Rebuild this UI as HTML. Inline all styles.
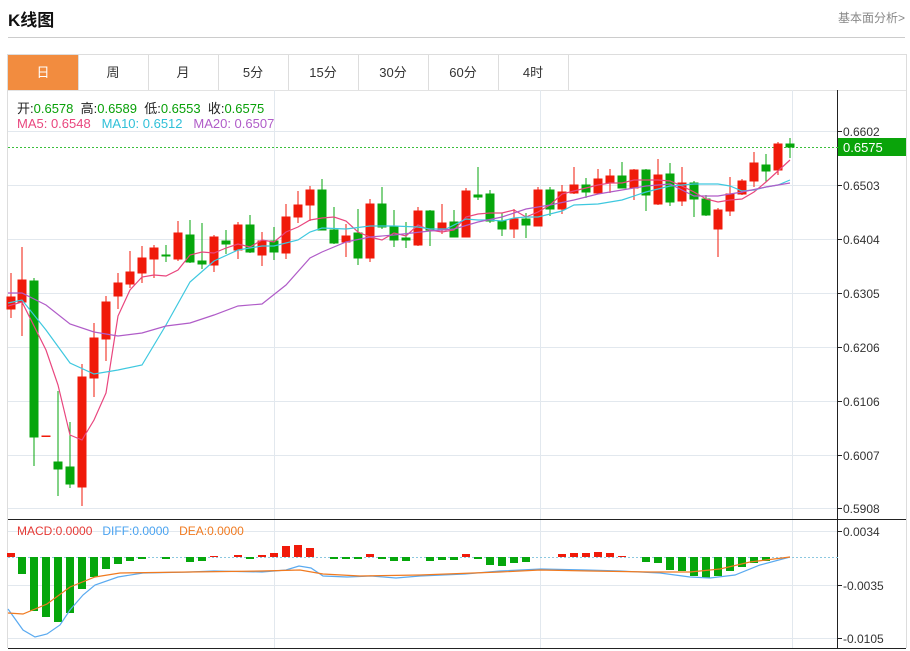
<!DOCTYPE html>
<html><head><meta charset="utf-8"><style>
body{margin:0;width:910px;height:651px;background:#fff;font-family:"Liberation Sans","Noto Sans CJK SC",sans-serif;position:relative;overflow:hidden}
.t{position:absolute;left:8px;top:6px;font-size:17px;font-weight:bold;color:#111}
.r{position:absolute;right:5px;top:9px;font-size:12px;color:#888}
.hl{position:absolute;left:8px;top:37px;width:897px;height:1px;background:#ccc}
.tabs{position:absolute;left:7px;top:54px;width:898px;height:35px;border:1px solid #ddd;border-bottom:1px solid #e3e3e3}
.tab{position:absolute;top:0;height:35px;width:70px;border-right:1px solid #ddd;text-align:center;line-height:35px;font-size:13px;color:#333}
.on{background:#f28c3f;color:#fff}
.info{position:absolute;left:17px;font-size:13px;white-space:pre}
</style></head><body>
<div class="t">K线图</div>
<div class="r">基本面分析&gt;</div>
<div class="hl"></div>
<div class="tabs">
<div class="tab on" style="left:0">日</div>
<div class="tab" style="left:70px">周</div>
<div class="tab" style="left:140px">月</div>
<div class="tab" style="left:210px">5分</div>
<div class="tab" style="left:280px">15分</div>
<div class="tab" style="left:350px">30分</div>
<div class="tab" style="left:420px">60分</div>
<div class="tab" style="left:490px">4时</div>
</div>
<svg style="position:absolute;left:0;top:0" width="910" height="651">
<g stroke="#e2e8ee" stroke-width="1">
<line x1="8" x2="838" y1="131.5" y2="131.5"/><line x1="8" x2="838" y1="185.5" y2="185.5"/><line x1="8" x2="838" y1="239.5" y2="239.5"/><line x1="8" x2="838" y1="293.5" y2="293.5"/><line x1="8" x2="838" y1="347.5" y2="347.5"/><line x1="8" x2="838" y1="401.5" y2="401.5"/><line x1="8" x2="838" y1="455.5" y2="455.5"/><line x1="8" x2="838" y1="508.5" y2="508.5"/>
<line x1="8" x2="838" y1="531.5" y2="531.5"/><line x1="8" x2="838" y1="585.5" y2="585.5"/><line x1="8" x2="838" y1="638.5" y2="638.5"/>
<line x1="274.5" x2="274.5" y1="90" y2="648"/><line x1="540.5" x2="540.5" y1="90" y2="648"/><line x1="792.5" x2="792.5" y1="90" y2="648"/>
</g>
<line x1="906.5" x2="906.5" y1="54" y2="648" stroke="#ddd"/>
<line x1="7.5" x2="7.5" y1="90" y2="648" stroke="#ddd"/>
<line x1="8" x2="906" y1="519.5" y2="519.5" stroke="#222"/>
<line x1="8" x2="906" y1="648.5" y2="648.5" stroke="#222"/>
<line x1="837.5" x2="837.5" y1="90" y2="648" stroke="#222"/>
<g stroke="#222"><line x1="838" x2="842" y1="131.5" y2="131.5"/><line x1="838" x2="842" y1="185.5" y2="185.5"/><line x1="838" x2="842" y1="239.5" y2="239.5"/><line x1="838" x2="842" y1="293.5" y2="293.5"/><line x1="838" x2="842" y1="347.5" y2="347.5"/><line x1="838" x2="842" y1="401.5" y2="401.5"/><line x1="838" x2="842" y1="455.5" y2="455.5"/><line x1="838" x2="842" y1="508.5" y2="508.5"/><line x1="838" x2="842" y1="531.5" y2="531.5"/><line x1="838" x2="842" y1="585.5" y2="585.5"/><line x1="838" x2="842" y1="638.5" y2="638.5"/></g>
<g font-size="12" fill="#333" font-family="Liberation Sans,sans-serif">
<text x="843" y="136">0.6602</text><text x="843" y="190">0.6503</text><text x="843" y="244">0.6404</text><text x="843" y="298">0.6305</text><text x="843" y="352">0.6206</text><text x="843" y="406">0.6106</text><text x="843" y="460">0.6007</text><text x="843" y="513">0.5908</text>
<text x="843" y="536">0.0034</text><text x="843" y="590">-0.0035</text><text x="843" y="643">-0.0105</text>
</g>
<line x1="8" x2="838" y1="147.5" y2="147.5" stroke="#3bbf3b" stroke-dasharray="2,2"/>
<rect x="838" y="138" width="68" height="18" fill="#0aa40a"/>
<text x="843" y="152" font-size="13" fill="#fff">0.6575</text>
<line x1="8" x2="838" y1="557.5" y2="557.5" stroke="#8cc8e0" stroke-dasharray="2,2"/>
<g fill="#f01a0a" stroke="#f01a0a" stroke-width="1">
<line x1="11" x2="11" y1="273" y2="318"/><rect x="7" y="297" width="8" height="12"/>
<line x1="22" x2="22" y1="247" y2="336"/><rect x="18" y="280" width="8" height="22"/>
<rect x="42" y="436" width="8" height="0.5"/>
<line x1="82" x2="82" y1="364" y2="506"/><rect x="78" y="377" width="8" height="110"/>
<line x1="94" x2="94" y1="323" y2="397"/><rect x="90" y="338" width="8" height="40"/>
<line x1="106" x2="106" y1="296" y2="361"/><rect x="102" y="302" width="8" height="37"/>
<line x1="118" x2="118" y1="273" y2="309"/><rect x="114" y="283" width="8" height="13"/>
<line x1="130" x2="130" y1="251" y2="288"/><rect x="126" y="272" width="8" height="12"/>
<line x1="142" x2="142" y1="246" y2="283"/><rect x="138" y="258" width="8" height="15"/>
<line x1="154" x2="154" y1="245" y2="278"/><rect x="150" y="248" width="8" height="11"/>
<line x1="178" x2="178" y1="221" y2="261"/><rect x="174" y="233" width="8" height="26"/>
<line x1="214" x2="214" y1="235" y2="272"/><rect x="210" y="237" width="8" height="28"/>
<line x1="238" x2="238" y1="222" y2="259"/><rect x="234" y="225" width="8" height="25"/>
<line x1="262" x2="262" y1="232" y2="266"/><rect x="258" y="241" width="8" height="14"/>
<line x1="286" x2="286" y1="204" y2="259"/><rect x="282" y="217" width="8" height="36"/>
<line x1="298" x2="298" y1="191" y2="223"/><rect x="294" y="205" width="8" height="12"/>
<line x1="310" x2="310" y1="186" y2="221"/><rect x="306" y="190" width="8" height="15"/>
<line x1="346" x2="346" y1="224" y2="257"/><rect x="342" y="236" width="8" height="6"/>
<line x1="370" x2="370" y1="199" y2="262"/><rect x="366" y="204" width="8" height="54"/>
<line x1="418" x2="418" y1="207" y2="246"/><rect x="414" y="211" width="8" height="34"/>
<line x1="442" x2="442" y1="204" y2="234"/><rect x="438" y="223" width="8" height="7"/>
<line x1="466" x2="466" y1="188" y2="237"/><rect x="462" y="191" width="8" height="46"/>
<line x1="514" x2="514" y1="209" y2="238"/><rect x="510" y="219" width="8" height="10"/>
<line x1="538" x2="538" y1="187" y2="226"/><rect x="534" y="190" width="8" height="36"/>
<line x1="562" x2="562" y1="185" y2="214"/><rect x="558" y="192" width="8" height="17"/>
<line x1="574" x2="574" y1="167" y2="194"/><rect x="570" y="185" width="8" height="8"/>
<line x1="598" x2="598" y1="169" y2="193"/><rect x="594" y="179" width="8" height="14"/>
<line x1="610" x2="610" y1="169" y2="193"/><rect x="606" y="176" width="8" height="7"/>
<line x1="634" x2="634" y1="169" y2="200"/><rect x="630" y="170" width="8" height="18"/>
<line x1="658" x2="658" y1="159" y2="205"/><rect x="654" y="175" width="8" height="29"/>
<line x1="682" x2="682" y1="167" y2="206"/><rect x="678" y="183" width="8" height="18"/>
<line x1="718" x2="718" y1="208" y2="257"/><rect x="714" y="210" width="8" height="19"/>
<line x1="730" x2="730" y1="177" y2="216"/><rect x="726" y="194" width="8" height="17"/>
<line x1="742" x2="742" y1="179" y2="195"/><rect x="738" y="181" width="8" height="13"/>
<line x1="754" x2="754" y1="152" y2="187"/><rect x="750" y="163" width="8" height="18"/>
<line x1="778" x2="778" y1="142" y2="175"/><rect x="774" y="144" width="8" height="26"/>
</g>
<g fill="#06a60c" stroke="#06a60c" stroke-width="1">
<line x1="34" x2="34" y1="278" y2="466"/><rect x="30" y="281" width="8" height="156"/>
<line x1="58" x2="58" y1="391" y2="496"/><rect x="54" y="462" width="8" height="7"/>
<line x1="70" x2="70" y1="422" y2="488"/><rect x="66" y="467" width="8" height="17"/>
<line x1="166" x2="166" y1="245" y2="262"/><rect x="162" y="255" width="8" height="1"/>
<line x1="190" x2="190" y1="220" y2="263"/><rect x="186" y="235" width="8" height="27"/>
<line x1="202" x2="202" y1="223" y2="269"/><rect x="198" y="261" width="8" height="3"/>
<line x1="226" x2="226" y1="230" y2="254"/><rect x="222" y="241" width="8" height="3"/>
<line x1="250" x2="250" y1="215" y2="253"/><rect x="246" y="225" width="8" height="27"/>
<line x1="274" x2="274" y1="227" y2="260"/><rect x="270" y="241" width="8" height="11"/>
<line x1="322" x2="322" y1="179" y2="230"/><rect x="318" y="190" width="8" height="40"/>
<line x1="334" x2="334" y1="207" y2="244"/><rect x="330" y="230" width="8" height="13"/>
<line x1="358" x2="358" y1="209" y2="265"/><rect x="354" y="233" width="8" height="25"/>
<line x1="382" x2="382" y1="187" y2="229"/><rect x="378" y="204" width="8" height="23"/>
<line x1="394" x2="394" y1="210" y2="247"/><rect x="390" y="227" width="8" height="13"/>
<line x1="406" x2="406" y1="222" y2="248"/><rect x="402" y="238" width="8" height="2"/>
<line x1="430" x2="430" y1="210" y2="246"/><rect x="426" y="211" width="8" height="19"/>
<line x1="454" x2="454" y1="210" y2="237"/><rect x="450" y="222" width="8" height="15"/>
<line x1="478" x2="478" y1="167" y2="200"/><rect x="474" y="195" width="8" height="2"/>
<line x1="490" x2="490" y1="190" y2="223"/><rect x="486" y="194" width="8" height="27"/>
<line x1="502" x2="502" y1="213" y2="236"/><rect x="498" y="221" width="8" height="8"/>
<line x1="526" x2="526" y1="213" y2="238"/><rect x="522" y="219" width="8" height="6"/>
<line x1="550" x2="550" y1="187" y2="216"/><rect x="546" y="190" width="8" height="19"/>
<line x1="586" x2="586" y1="178" y2="198"/><rect x="582" y="185" width="8" height="7"/>
<line x1="622" x2="622" y1="162" y2="188"/><rect x="618" y="176" width="8" height="12"/>
<line x1="646" x2="646" y1="169" y2="211"/><rect x="642" y="170" width="8" height="25"/>
<line x1="670" x2="670" y1="163" y2="206"/><rect x="666" y="174" width="8" height="28"/>
<line x1="694" x2="694" y1="181" y2="217"/><rect x="690" y="183" width="8" height="16"/>
<line x1="706" x2="706" y1="195" y2="216"/><rect x="702" y="199" width="8" height="16"/>
<line x1="766" x2="766" y1="154" y2="182"/><rect x="762" y="165" width="8" height="6"/>
<line x1="790" x2="790" y1="138" y2="158"/><rect x="786" y="144" width="8" height="3"/>
</g>
<g fill="none" stroke-width="1.2">
<polyline stroke="#e9467e" points="8,306 22,302 46,350 58,385 70,435 82,440 94,420 106,393 118,316 130,290 142,277 154,275 166,276 178,270 190,255 202,252 214,253 226,248 238,244 250,247 262,240 274,242 286,232 298,227 310,220 322,218 334,217 346,221 358,232 370,237 382,240 394,233 406,236 418,225 430,230 442,232 454,230 466,217 478,214 490,213 502,213 514,210 526,217 538,212 550,205 562,194 574,191 586,188 598,185 610,183 622,183 634,180 646,180 658,180 670,181 682,186 694,192 706,199 718,202 730,200 742,199 754,192 766,182 778,171 790,160"/>
<polyline stroke="#3ec8df" points="8,303 22,300 46,330 70,363 94,374 118,370 142,365 166,325 190,282 214,261 238,250 262,246 274,246 298,240 310,232 322,228 346,229 370,226 394,226 418,227 430,229 446,229 466,219 478,220 490,220 502,221 514,218 526,217 538,217 550,214 562,211 574,205 598,204 622,200 646,192 670,186 694,184 718,184 730,186 742,191 754,190 766,187 778,185 790,180"/>
<polyline stroke="#b05cc8" points="8,293 22,293 46,305 70,324 94,332 118,336 142,333 166,326 190,323 214,315 238,306 262,304 286,285 310,258 322,252 346,242 370,237 394,235 430,231 454,229 478,222 502,217 526,209 550,205 574,200 598,194 622,190 646,186 670,184 694,196 718,196 742,192 766,187 790,183"/>
</g>
<g fill="#f01a0a">
<rect x="7" y="553" width="8" height="4"/><rect x="210" y="556" width="8" height="1"/><rect x="234" y="555" width="8" height="2"/><rect x="258" y="555" width="8" height="2"/><rect x="270" y="553" width="8" height="4"/><rect x="282" y="546" width="8" height="11"/><rect x="294" y="545" width="8" height="12"/><rect x="306" y="548" width="8" height="9"/><rect x="366" y="554" width="8" height="3"/><rect x="462" y="554" width="8" height="3"/><rect x="558" y="554" width="8" height="3"/><rect x="570" y="553" width="8" height="4"/><rect x="582" y="553" width="8" height="4"/><rect x="594" y="552" width="8" height="5"/><rect x="606" y="553" width="8" height="4"/><rect x="618" y="556" width="8" height="1"/>
</g>
<g fill="#06a60c">
<rect x="18" y="557" width="8" height="17"/><rect x="30" y="557" width="8" height="54"/><rect x="42" y="557" width="8" height="60"/><rect x="54" y="557" width="8" height="65"/><rect x="66" y="557" width="8" height="56"/><rect x="78" y="557" width="8" height="32"/><rect x="90" y="557" width="8" height="20"/><rect x="102" y="557" width="8" height="12"/><rect x="114" y="557" width="8" height="7"/><rect x="126" y="557" width="8" height="4"/><rect x="138" y="557" width="8" height="2"/><rect x="162" y="557" width="8" height="2"/><rect x="186" y="557" width="8" height="5"/><rect x="198" y="557" width="8" height="4"/><rect x="246" y="557" width="8" height="2"/><rect x="330" y="557" width="8" height="2"/><rect x="342" y="557" width="8" height="2"/><rect x="354" y="557" width="8" height="2"/><rect x="378" y="557" width="8" height="2"/><rect x="390" y="557" width="8" height="4"/><rect x="402" y="557" width="8" height="4"/><rect x="426" y="557" width="8" height="4"/><rect x="438" y="557" width="8" height="3"/><rect x="450" y="557" width="8" height="3"/><rect x="474" y="557" width="8" height="2"/><rect x="486" y="557" width="8" height="8"/><rect x="498" y="557" width="8" height="9"/><rect x="510" y="557" width="8" height="6"/><rect x="522" y="557" width="8" height="5"/><rect x="642" y="557" width="8" height="5"/><rect x="654" y="557" width="8" height="6"/><rect x="666" y="557" width="8" height="13"/><rect x="678" y="557" width="8" height="14"/><rect x="690" y="557" width="8" height="19"/><rect x="702" y="557" width="8" height="21"/><rect x="714" y="557" width="8" height="19"/><rect x="726" y="557" width="8" height="14"/><rect x="738" y="557" width="8" height="10"/><rect x="750" y="557" width="8" height="6"/><rect x="762" y="557" width="8" height="4"/>
</g>
<g fill="none" stroke-width="1.2">
<polyline stroke="#5aaaf0" points="8,609 23,630 35,637 47,634 60,625 70,610 83,595 95,585 118,577 143,573 190,572 214,571 262,572 286,570 299,566 311,568 323,576 347,577 371,576 396,578 420,576 465,574 500,571 541,569 586,570 620,571 660,573 690,577 710,578 735,575 760,565 790,557"/>
<polyline stroke="#f07a20" points="8,613 23,614 47,604 70,587 95,577 120,573 190,572 262,571 300,570 323,574 360,576 420,575 500,572 540,570 590,571 650,572 690,572 720,569 750,562 790,557"/>
</g>
<text x="17" y="535" font-size="12"><tspan fill="#e53935">MACD:0.0000</tspan><tspan fill="#4aa3f0" dx="10">DIFF:0.0000</tspan><tspan fill="#f07a20" dx="10">DEA:0.0000</tspan></text>
</svg>
<div class="info" style="top:98px;color:#222">开:<span style="color:#08a008">0.6578</span>  高:<span style="color:#08a008">0.6589</span>  低:<span style="color:#08a008">0.6553</span>  收:<span style="color:#08a008">0.6575</span></div>
<div class="info" style="top:116px"><span style="color:#e9467e">MA5: 0.6548</span>   <span style="color:#30c0d8">MA10: 0.6512</span>   <span style="color:#b05cc8">MA20: 0.6507</span></div>
</body></html>
